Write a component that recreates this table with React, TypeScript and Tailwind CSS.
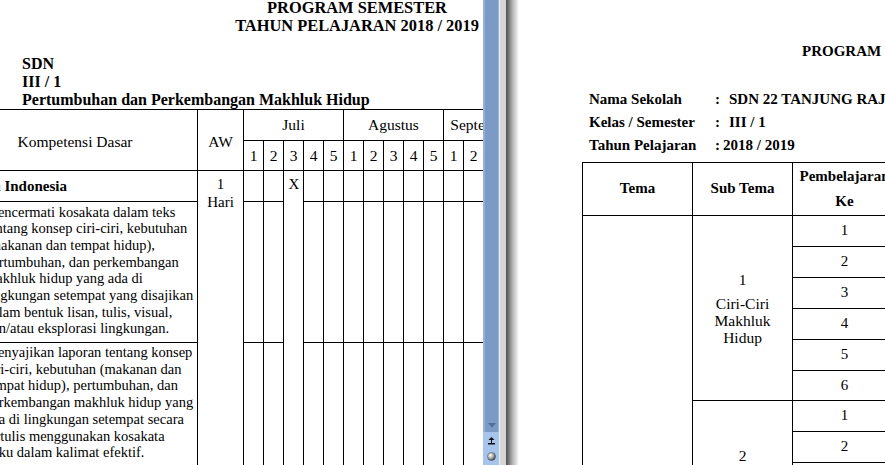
import React from "react";

const KD1 = [
  "Mencermati kosakata dalam teks",
  "tentang konsep ciri-ciri, kebutuhan",
  "(makanan dan tempat hidup),",
  "pertumbuhan, dan perkembangan",
  "makhluk hidup yang ada di",
  "lingkungan setempat yang disajikan",
  "dalam bentuk lisan, tulis, visual,",
  "dan/atau eksplorasi lingkungan.",
];

const KD2 = [
  "Menyajikan laporan tentang konsep",
  "ciri-ciri, kebutuhan (makanan dan",
  "tempat hidup), pertumbuhan, dan",
  "perkembangan makhluk hidup yang",
  "ada di lingkungan setempat secara",
  "tertulis menggunakan kosakata",
  "baku dalam kalimat efektif.",
];

const WEEKS = [1, 2, 3, 4, 5, 1, 2, 3, 4, 5, 1, 2, 3, 4];

function Cell({ className = "", children }: { className?: string; children?: React.ReactNode }) {
  return <div className={"border-l border-t border-black " + className}>{children}</div>;
}

function KdParagraph({ no, lines }: { no: string; lines: string[] }) {
  return (
    <div className="flex pl-[3px] text-[14.5px] leading-[16.7px] whitespace-nowrap">
      <span className="w-[29px] shrink-0">{no}</span>
      <div>
        {lines.map((l, i) => (
          <div key={i}>{l}</div>
        ))}
      </div>
    </div>
  );
}

function LeftPage() {
  const emptyCells = Array.from({ length: 39 });
  return (
    <div className="w-[483px] h-full overflow-hidden bg-white shrink-0">
      <div className="-ml-[48px] w-[900px]">
        <div className="w-[810px] -mt-px text-center text-[16.4px] leading-[18px] font-bold">
          <div>PROGRAM SEMESTER</div>
          <div>TAHUN PELAJARAN 2018 / 2019</div>
        </div>
        <div className="mt-[20px] pl-[70px] text-[16px] leading-[18px] font-bold">
          <div>SDN</div>
          <div>III / 1</div>
          <div>Pertumbuhan dan Perkembangan Makhluk Hidup</div>
        </div>

        <div className="grid grid-cols-[245px_46px_repeat(14,20px)] grid-rows-[31px_30px_31px_141px_160px] text-[15.5px]">
          <Cell className="col-start-1 row-start-1 row-span-2 flex items-center justify-center pt-[3px]">
            Kompetensi Dasar
          </Cell>
          <Cell className="col-start-2 row-start-1 row-span-2 flex items-center justify-center pt-[3px]">
            AW
          </Cell>
          <Cell className="col-span-5 flex items-center justify-center">Juli</Cell>
          <Cell className="col-span-5 flex items-center justify-center">Agustus</Cell>
          <Cell className="col-span-4 flex items-center justify-center">September</Cell>
          {WEEKS.map((w, i) => (
            <Cell key={i} className="flex items-center justify-center">
              {w}
            </Cell>
          ))}

          <Cell className="col-start-1 row-start-3 flex items-center pl-px font-bold text-[15px] leading-[18px] whitespace-nowrap">
            Bahasa Indonesia
          </Cell>
          <Cell className="col-start-2 row-start-3 row-span-3 pt-[4px] text-center text-[15px] leading-[18px]">
            <div>1</div>
            <div>Hari</div>
          </Cell>
          <Cell className="col-start-5 row-start-3 row-span-3 pt-[4px] pl-px text-center text-[15px] leading-[18px]">
            X
          </Cell>
          <Cell className="col-start-1 row-start-4 pt-[1.5px]">
            <KdParagraph no="3.8" lines={KD1} />
          </Cell>
          <Cell className="col-start-1 row-start-5 pt-[1px]">
            <KdParagraph no="4.8" lines={KD2} />
          </Cell>
          {emptyCells.map((_, i) => (
            <Cell key={"e" + i} />
          ))}
        </div>
      </div>
    </div>
  );
}

function Scrollbar() {
  return (
    <div className="w-[16px] h-full flex flex-col shrink-0">
      <div className="flex-1 bg-[#7b9ac6] border-l-2 border-l-[#96b1d8] border-r border-r-[#9ab3d8]" />
      <div className="h-[14px] bg-[#7b9ac6] border-l-2 border-l-[#96b1d8] border-r border-r-[#9ab3d8] flex items-center justify-center">
        <svg width="8" height="5" viewBox="0 0 8 5">
          <path d="M0 0 L8 0 L4 4.5 Z" fill="#4f6e9f" />
        </svg>
      </div>
      <div className="h-[33px] bg-[#a7c4ed] flex flex-col items-center pt-[5px] gap-[7px]">
        <svg width="7" height="8" viewBox="0 0 7 8">
          <path d="M3.5 0 L6.5 3 L0.5 3 Z" fill="#111" />
          <rect x="3" y="3" width="1" height="3" fill="#111" />
          <rect x="0" y="6" width="7" height="1.5" fill="#111" />
        </svg>
        <svg width="9" height="9" viewBox="0 0 9 9">
          <defs>
            <radialGradient id="ball" cx="35%" cy="35%" r="65%">
              <stop offset="0%" stopColor="#ffffff" />
              <stop offset="60%" stopColor="#a8a8a8" />
              <stop offset="100%" stopColor="#4a4a4a" />
            </radialGradient>
          </defs>
          <circle cx="4.5" cy="4.5" r="4" fill="url(#ball)" stroke="#555" strokeWidth="0.6" />
        </svg>
      </div>
    </div>
  );
}

function RightPage() {
  const nums = [1, 2, 3, 4, 5, 6, 1, 2, 3];
  return (
    <div className="flex-1 h-full flex overflow-hidden">
      <div className="w-px bg-[#efefef] shrink-0" />
      <div className="w-[6px] bg-[#d5d5d5] shrink-0" />
      <div className="w-[13px] bg-linear-to-r from-[#4e4e4e] via-[#b4b4b4] to-white shrink-0" />
      <div className="flex-1 bg-white overflow-hidden">
        <div className="w-[600px] text-[15px]">
          <div className="pt-[42px] pl-[283px] font-bold leading-[18px] whitespace-nowrap">PROGRAM SEMESTER</div>
          <div className="mt-[28px] pl-[70px] font-bold leading-[23px] whitespace-nowrap">
            <div className="flex">
              <span className="w-[126px]">Nama Sekolah</span>
              <span>:</span>
              <span className="ml-[9px]">SDN 22 TANJUNG RAJA</span>
            </div>
            <div className="flex">
              <span className="w-[126px]">Kelas / Semester</span>
              <span>:</span>
              <span className="ml-[9px]">III / 1</span>
            </div>
            <div className="flex">
              <span className="w-[126px]">Tahun Pelajaran</span>
              <span>:</span>
              <span className="ml-[3px]">2018 / 2019</span>
            </div>
          </div>

          <div className="mt-[4.5px] ml-[63px] grid grid-cols-[110px_100px_104px] grid-rows-[53px_31px_31px_31px_31px_31px_30px_31px_31px_31px]">
            <Cell className="flex items-center justify-center font-bold">Tema</Cell>
            <Cell className="flex items-center justify-center font-bold">Sub Tema</Cell>
            <Cell className="flex flex-col items-center justify-center font-bold leading-[25px]">
              <div>Pembelajaran</div>
              <div>Ke</div>
            </Cell>
            <Cell className="col-start-1 row-start-2 row-span-9" />
            <Cell className="col-start-2 row-start-2 row-span-6 flex flex-col items-center justify-center text-center text-[15.5px] leading-[17px] pt-px">
              <div className="mb-[7px]">1</div>
              <div>Ciri-Ciri</div>
              <div>Makhluk</div>
              <div>Hidup</div>
            </Cell>
            <Cell className="col-start-2 row-start-8 row-span-3 pt-[46px] text-center text-[15.5px] leading-[17px]">
              <div className="mb-[7px]">2</div>
              <div>Pertumbuhan</div>
              <div>dan</div>
            </Cell>
            {nums.map((n, i) => (
              <Cell key={i} className="flex items-center justify-center">
                {n}
              </Cell>
            ))}
          </div>
        </div>
      </div>
    </div>
  );
}

export default function App() {
  return (
    <div className="w-[885px] h-[465px] flex overflow-hidden bg-white text-black font-['Liberation_Serif','Times_New_Roman',serif]">
      <LeftPage />
      <Scrollbar />
      <RightPage />
    </div>
  );
}
